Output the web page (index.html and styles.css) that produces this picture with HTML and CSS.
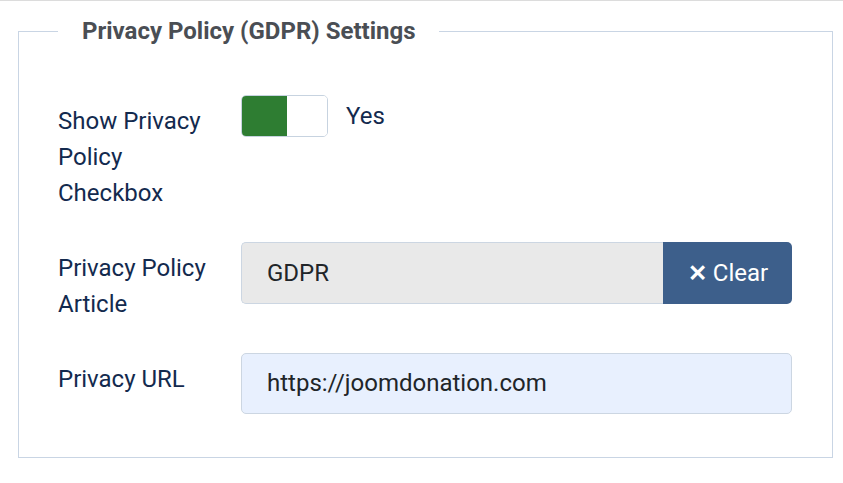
FILE: index.html
```html
<!DOCTYPE html>
<html lang="en">
<head>
<meta charset="utf-8">
<title>Privacy Policy (GDPR) Settings</title>
<link rel="stylesheet" href="styles.css">
</head>
<body>
<div class="topline"></div>
<fieldset class="options">
  <legend class="options-legend">Privacy Policy (GDPR) Settings</legend>

  <div class="row">
    <label class="row-label">Show Privacy Policy Checkbox</label>
    <div class="row-control toggle-wrap">
      <span class="toggle"><span class="toggle-on"></span><span class="toggle-off"></span></span>
      <span class="toggle-text">Yes</span>
    </div>
  </div>

  <div class="row">
    <label class="row-label">Privacy Policy Article</label>
    <div class="row-control input-group">
      <span class="field field-readonly">GDPR</span>
      <button class="btn-clear" type="button"><span class="x">✕</span> Clear</button>
    </div>
  </div>

  <div class="row row-last">
    <label class="row-label">Privacy URL</label>
    <div class="row-control">
      <span class="field field-url">https://joomdonation.com</span>
    </div>
  </div>
</fieldset>
</body>
</html>
```

FILE: styles.css
```css
html, body {
  margin: 0;
  padding: 0;
  background: #ffffff;
}
body {
  font-family: Roboto, "Liberation Sans", sans-serif;
  width: 843px;
  height: 483px;
  overflow: hidden;
}
.topline {
  height: 1px;
  background: #dcdcdc;
}
.options {
  margin: 18px 0 0 18px;
  width: 814px;
  box-sizing: border-box;
  height: 439px;
  border: 1px solid #c9d5e4;
  padding: 52px 40px 0 39px;
}
.options-legend {
  margin-left: 0;
  padding: 0 23px 0 24px;
  font-size: 24px;
  font-weight: 700;
  color: #4a4e54;
  line-height: 24px;
}
.row {
  display: flex;
  gap: 20px;
  margin-bottom: 31px;
}
.row-label {
  width: 163px;
  flex: none;
  padding-top: 8px;
  font-size: 24px;
  line-height: 36px;
  color: #132a4e;
}
.row-control {
  width: 551px;
  flex: none;
}
.toggle-wrap {
  display: flex;
  align-items: flex-start;
  gap: 18px;
}
.toggle {
  display: flex;
  width: 87px;
  height: 42px;
  box-sizing: border-box;
  border: 1px solid #c7d3e0;
  border-radius: 5px;
  overflow: hidden;
}
.toggle-on {
  width: 45px;
  background: #2e7d32;
}
.toggle-off {
  flex: 1;
  background: #ffffff;
}
.toggle-text {
  font-size: 24px;
  line-height: 42px;
  color: #132a4e;
}
.input-group {
  display: flex;
}
.field {
  display: block;
  box-sizing: border-box;
  height: 62px;
  padding: 0 25px;
  font-size: 24px;
  line-height: 60px;
  color: #212529;
  border: 1px solid #ccd6e2;
  border-radius: 5px;
}
.field-readonly {
  flex: 1;
  background: #e9e9e9;
  border-right: 0;
  border-radius: 5px 0 0 5px;
}
.field-url {
  height: 61px;
  line-height: 59px;
  background: #e8f0fe;
}
.btn-clear {
  width: 129px;
  height: 62px;
  border: 0;
  border-radius: 0 5px 5px 0;
  background: #3d5f8b;
  color: #ffffff;
  font-family: Roboto, "Liberation Sans", sans-serif;
  font-size: 24px;
  padding: 0 0 0 1px;
}
.btn-clear .x {
  font-weight: 700;
  font-size: 23px;
}
```
